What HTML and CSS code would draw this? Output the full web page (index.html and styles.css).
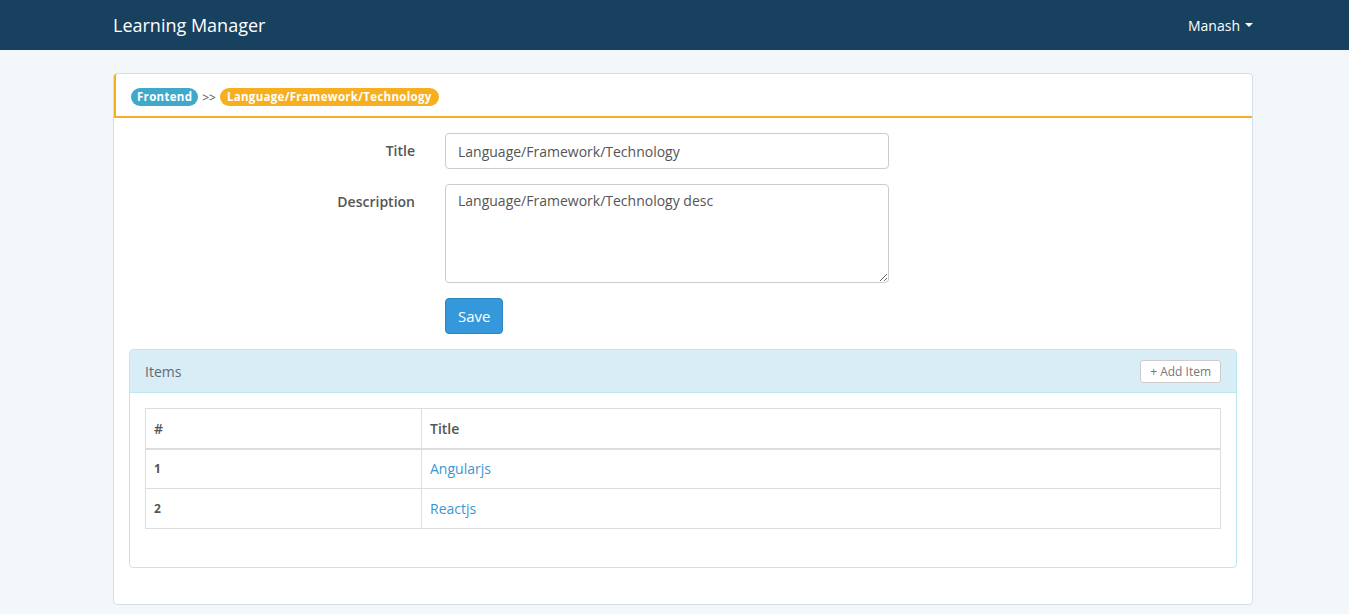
FILE: index.html
```html
<!DOCTYPE html>
<html>
<head>
<meta charset="utf-8">
<title>Learning Manager</title>
<link rel="stylesheet" href="styles.css">
</head>
<body>
<nav class="navbar">
  <div class="nav-inner">
    <a class="brand" href="#">Learning Manager</a>
    <a class="user" href="#">Manash <span class="caret"></span></a>
  </div>
</nav>
<main class="page">
  <section class="panel">
    <div class="panel-heading">
      <span class="badge badge-info">Frontend</span>
      <span class="sep">&gt;&gt;</span>
      <span class="badge badge-warning">Language/Framework/Technology</span>
    </div>
    <div class="panel-body">
      <form class="form">
        <div class="form-row">
          <label class="form-label">Title</label>
          <input class="form-control" type="text" value="Language/Framework/Technology">
        </div>
        <div class="form-row">
          <label class="form-label">Description</label>
          <textarea class="form-control textarea">Language/Framework/Technology desc</textarea>
        </div>
        <div class="form-row">
          <span></span>
          <div><button class="btn-save" type="button">Save</button></div>
        </div>
      </form>
      <div class="items">
        <div class="items-heading">
          <span class="items-title">Items</span>
          <button class="btn-add" type="button">+ Add Item</button>
        </div>
        <div class="items-body">
          <table class="table">
            <thead>
              <tr><th class="col-num">#</th><th>Title</th></tr>
            </thead>
            <tbody>
              <tr><td class="num">1</td><td><a href="#">Angularjs</a></td></tr>
              <tr><td class="num">2</td><td><a href="#">Reactjs</a></td></tr>
            </tbody>
          </table>
        </div>
      </div>
    </div>
  </section>
</main>
</body>
</html>
```

FILE: styles.css
```css
* { box-sizing: border-box; }
html, body { margin: 0; padding: 0; }
body {
  background: #f3f7fa;
  font-family: "Open Sans", "Liberation Sans", sans-serif;
  font-size: 14px;
  color: #555;
}
.navbar {
  height: 50px;
  background: #17415f;
}
.nav-inner {
  height: 50px;
  margin-left: 113px;
  width: 1140px;
  display: flex;
  align-items: center;
  justify-content: space-between;
}
.brand {
  color: #fff;
  text-decoration: none;
  font-size: 18px;
}
.user {
  color: #fff;
  text-decoration: none;
  font-size: 14px;
  display: flex;
  align-items: center;
  gap: 5px;
}
.caret {
  width: 0; height: 0;
  border-left: 4px solid transparent;
  border-right: 4px solid transparent;
  border-top: 4px solid #fff;
}
.page {
  padding-top: 23px;
  margin-left: 113px;
  width: 1140px;
}
.panel {
  background: #fff;
  border: 1px solid #d3e0ea;
  border-radius: 4px;
}
.panel-heading {
  height: 44px;
  border-left: 2px solid #f7ae1f;
  border-bottom: 2px solid #f7ae1f;
  border-top-left-radius: 3px;
  padding: 4px 0 0 15px;
  display: flex;
  align-items: center;
  gap: 4px;
}
.badge {
  display: inline-block;
  color: #fff;
  font-weight: 700;
  font-size: 11.5px;
  letter-spacing: 0.3px;
  line-height: 18px;
  padding: 0 6px;
  border-radius: 10px;
}
.badge-info { background: #3fa8cb; }
.badge-warning { background: #f7ae1f; padding: 0 7px; }
.sep { color: #555; font-size: 12px; }
.panel-body {
  padding: 15px 15px 36px 15px;
}
.form-row {
  display: grid;
  grid-template-columns: 286px 444px;
  column-gap: 30px;
  margin-bottom: 15px;
}
.form-label {
  text-align: right;
  font-weight: 600;
  padding-top: 8px;
  color: #555;
}
.form-control {
  width: 444px;
  height: 36px;
  padding: 6px 12px;
  border: 1px solid #ccc;
  border-radius: 4px;
  font-family: inherit;
  font-size: 14px;
  color: #555;
  background: #fff;
}
.textarea {
  height: 99px;
  display: block;
  resize: vertical;
}
.btn-save {
  background: #3498db;
  border: 1px solid #2d86c2;
  color: #fff;
  font-family: inherit;
  font-size: 15px;
  height: 36px;
  padding: 0 12px;
  border-radius: 4px;
}
.items {
  border: 1px solid #bce8f1;
  border-radius: 4px;
}
.items-heading {
  height: 43px;
  background: #d9edf7;
  border-bottom: 1px solid #bce8f1;
  display: flex;
  align-items: center;
  justify-content: space-between;
  padding: 0 15px;
}
.items-title { color: #616874; font-size: 14px; }
.btn-add {
  background: #fff;
  border: 1px solid #ccc;
  border-radius: 3px;
  color: #777;
  font-family: inherit;
  font-size: 12px;
  height: 23px;
  padding: 0 9px;
}
.items-body {
  padding: 15px 15px 38px;
}
.table {
  width: 100%;
  border-collapse: collapse;
  border: 1px solid #ddd;
}
.table th, .table td {
  border: 1px solid #ddd;
  text-align: left;
  padding: 0 8px;
}
.table th {
  height: 40px;
  border-bottom: 2px solid #ddd;
  font-weight: 600;
  color: #555;
}
.table td { height: 40px; }
.col-num { width: 276px; }
.num { font-weight: 700; font-size: 12px; }
.table a { color: #3a97d3; text-decoration: none; }
```
